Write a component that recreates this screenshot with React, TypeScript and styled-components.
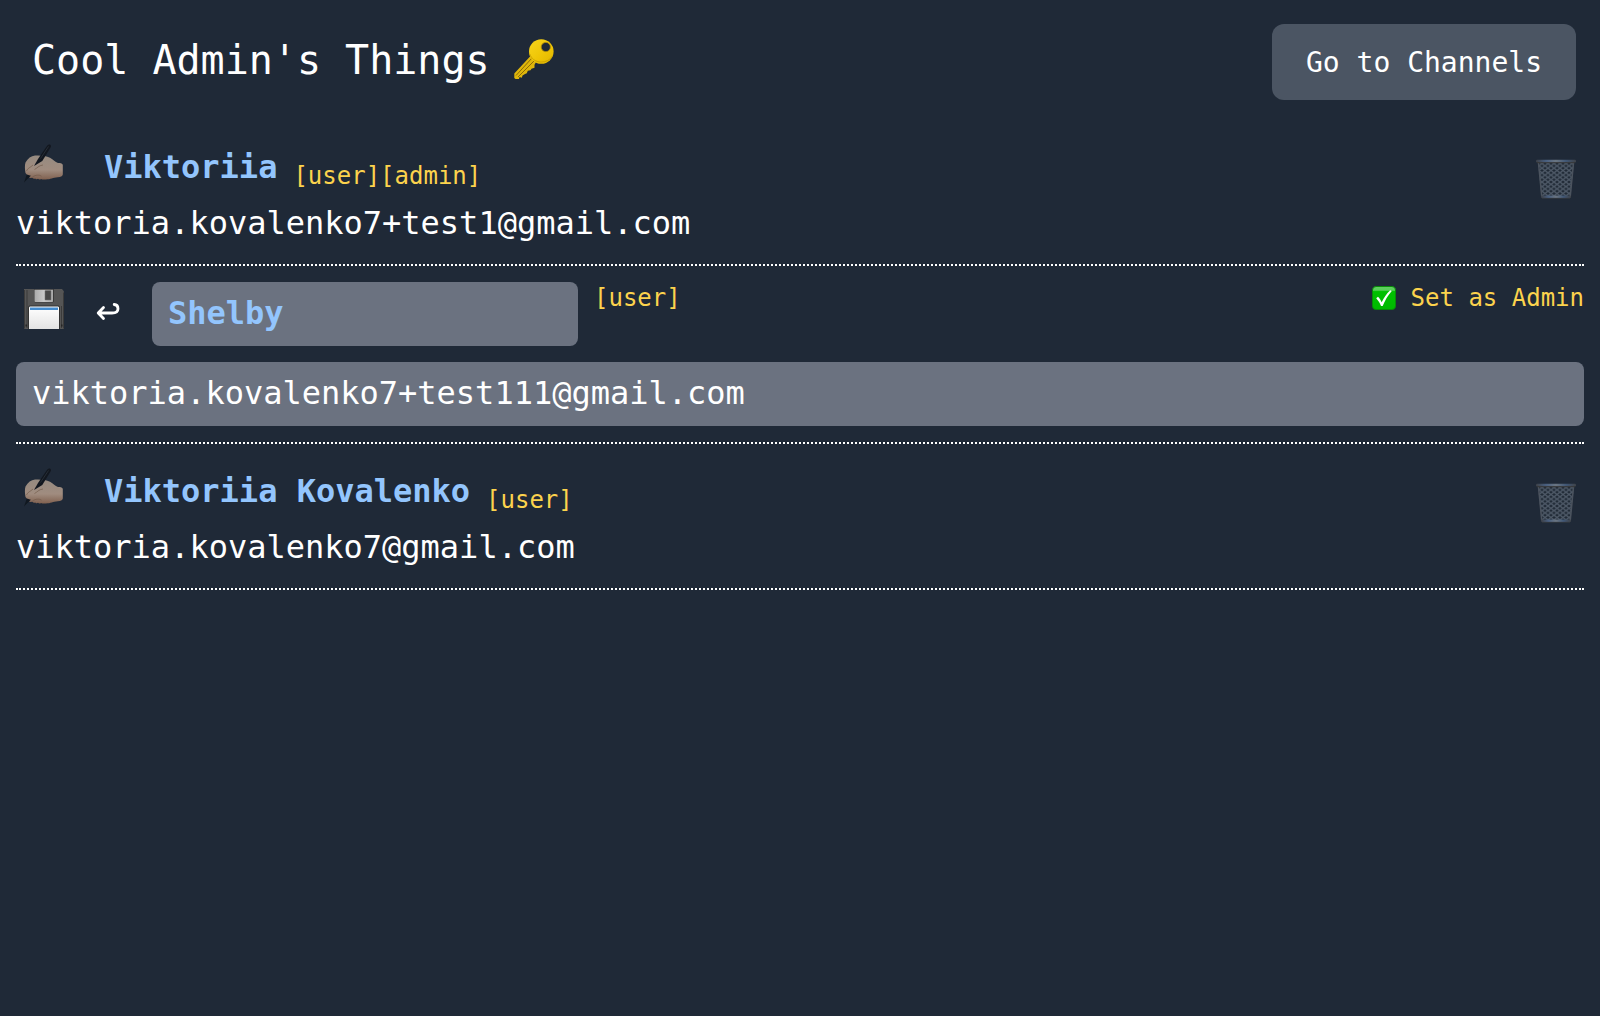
import React from "react";
import styled, { createGlobalStyle } from "styled-components";

const Global = createGlobalStyle`
  * { box-sizing: border-box; }
  body {
    margin: 0;
    min-height: 100vh;
    background: #1f2937;
    color: #fff;
    font-family: "DejaVu Sans Mono", monospace;
  }
  button, input { font-family: inherit; }
  svg { display: block; }
`;

const Header = styled.header`
  display: flex;
  justify-content: space-between;
  align-items: flex-start;
  height: 120px;
  padding: 24px 24px 0 32px;
`;

const Title = styled.h1`
  display: flex;
  margin: 8px 0 0;
  font-size: 40px;
  line-height: 56px;
  font-weight: 400;
  white-space: pre;
`;

const KeySlot = styled.span`
  margin: 7px 0 0 -1px;
`;

const NavButton = styled.button`
  width: 304px;
  height: 76px;
  padding: 2px 0 0;
  border: 0;
  border-radius: 12px;
  background: #4b5563;
  color: #fff;
  font-size: 28px;
  line-height: 40px;
`;

const List = styled.main`
  padding: 0 16px;
`;

const Row = styled.section<{ $editing?: boolean }>`
  display: flex;
  flex-direction: column;
  height: ${(p) => (p.$editing ? 178 : 146)}px;
  padding-top: ${(p) => (p.$editing ? 16 : 23)}px;
  border-bottom: 2px dotted #fff;
`;

const Line = styled.div<{ $height: number; $gap: number }>`
  display: flex;
  align-items: flex-start;
  height: ${(p) => p.$height}px;
  margin-bottom: ${(p) => p.$gap}px;
`;

const IconButton = styled.button<{ $top: number; $width?: number }>`
  display: flex;
  flex: none;
  justify-content: center;
  width: ${(p) => p.$width ?? 56}px;
  margin-top: ${(p) => p.$top}px;
  padding: 0;
  border: 0;
  background: none;
  color: inherit;
`;

const CancelButton = styled(IconButton)`
  padding-right: 8px;
`;

const Name = styled.strong`
  margin-left: 32px;
  color: #93c5fd;
  font-size: 32px;
  line-height: 48px;
`;

const Roles = styled.span<{ $top: number }>`
  margin: ${(p) => p.$top}px auto 0 16px;
  color: #fcd34d;
  font-size: 24px;
  line-height: 32px;
`;

const Email = styled.div`
  font-size: 32px;
  line-height: 48px;
`;

const Field = styled.input<{ $name?: boolean }>`
  flex: none;
  width: ${(p) => (p.$name ? "426px" : "100%")};
  height: 64px;
  padding: 0 16px 2px;
  border: 0;
  border-radius: 8px;
  outline: 0;
  background: #6b7280;
  color: ${(p) => (p.$name ? "#93c5fd" : "#fff")};
  font-size: 32px;
  font-weight: ${(p) => (p.$name ? 700 : 400)};
`;

const AdminToggle = styled.button`
  display: flex;
  align-items: center;
  gap: 15px;
  height: 31px;
  padding: 0;
  border: 0;
  background: none;
  color: #fcd34d;
  font-size: 24px;
  line-height: 32px;
`;

const KeyIcon = () => (
  <svg width="42" height="41" viewBox="0 0 42 41">
    <defs>
      <linearGradient id="keyGold" x1="0" y1="0" x2="1" y2="1">
        <stop offset="0" stopColor="#f8d51c" />
        <stop offset=".6" stopColor="#eec405" />
        <stop offset="1" stopColor="#e0b500" />
      </linearGradient>
    </defs>
    <path
      fill="#dfb60b"
      d="M17.500 17 1.300 34.500V39l1.200 1h3.500l.5-2 2.300.8.7-2.300 2.500-1.500 1.800-.7 1-2.500 2.700-.5 1-1.500 3-1v-3l2-3.500Z"
    />
    <path d="m3 36.500 16-17.500M5 38 21 22" stroke="#8d6b06" strokeWidth="1" fill="none" />
    <circle cx="28.300" cy="12.500" r="12.300" fill="url(#keyGold)" />
    <path d="M16.800 15c1.500 4.500 5.500 8 11.300 8 5 0 9-2 11.300-6" stroke="#c49a00" strokeWidth=".8" fill="none" />
    <circle cx="32.800" cy="8" r="4.600" fill="#1f2937" stroke="#b38d05" strokeWidth=".8" />
  </svg>
);

const WritingIcon = () => (
  <svg width="40" height="40" viewBox="0 0 40 40">
    <defs>
      <linearGradient id="skin" x1="0" y1="0" x2="0" y2="1">
        <stop offset="0" stopColor="#968b81" />
        <stop offset=".6" stopColor="#a08c7f" />
        <stop offset="1" stopColor="#80604f" />
      </linearGradient>
    </defs>
    <path
      fill="url(#skin)"
      d="M1.500 18.500C4 14.500 7 11.800 11 11.500c6-.3 11 .2 15 2.300 3.500 2 5 4.500 8 5.200 3 0 4.500.5 4.800 2v9.500c-.5 2-2 2.500-5 2.800-5 .3-7 2.200-12 2.200-2 0-3 .3-4.800-.5-1 .9-2 .8-3-.2-1 .7-2 .6-2.700-.4-1 .5-2 .4-3-.6l-2.500.2L1.500 29C.8 25 .6 21.500 1.500 18.500Z"
    />
    <path d="M10.500 25.500c3-1.500 4-4 8.500-4.500M8.500 33c3-2.300 7-2.300 9-.8M2.500 27c1-3 4-3.500 6.500-6" stroke="#6d5545" strokeWidth=".6" fill="none" />
    <path d="M23.300 1.500C24.800-.5 27.600.5 26.800 3L18.300 17 10 22l4-7Z" fill="#12171f" />
    <path d="m24.500 2.500-8 12" stroke="#343c47" strokeWidth=".6" />
    <path d="M2.800 30.500 6.800 31.800 0 38.500Z" fill="#111820" />
  </svg>
);

const FloppyIcon = () => (
  <svg width="40" height="40" viewBox="0 0 40 40">
    <defs>
      <linearGradient id="shutter" x1="0" y1="0" x2="1" y2="0">
        <stop offset="0" stopColor="#aaa" />
        <stop offset=".5" stopColor="#c8c8c8" />
        <stop offset="1" stopColor="#aaa" />
      </linearGradient>
      <linearGradient id="label" x1="0" y1="0" x2="0" y2="1">
        <stop offset="0" stopColor="#fff" />
        <stop offset="1" stopColor="#e3e3e3" />
      </linearGradient>
    </defs>
    <path d="M0 0h38L40 2.500V40H0Z" fill="#555" />
    <path d="M.5 1v38.500M39.500 3.500v36M3 1v38M37.500 17v22" stroke="#3b3b3b" fill="none" />
    <path d="M10 0h20v11.500c0 1.500-.5 2-2 2H12c-1.500 0-2-.5-2-2Z" fill="#3a3a3a" />
    <path d="M10.500.8h18.500v11.200c0 .7-.4 1-1 1H11.500c-.7 0-1-.3-1-1Z" fill="url(#shutter)" />
    <rect x="21" y="1.500" width="6" height="9.500" rx=".5" fill="#484848" stroke="#777" strokeWidth=".5" />
    <path d="M4 40V19c0-2 1-2.500 2.500-2.500h27c1.500 0 2.500.5 2.500 2.500v21Z" fill="#333" />
    <path d="M5 40V19c0-1 .5-1.500 1.500-1.500h27c1 0 1.500.5 1.500 1.500v21Z" fill="url(#label)" />
    <path d="M6 18.500h28V21H6Z" fill="#438bce" />
    <path d="M1.500 35.500h1.500v2H1.500Zm35.500 0h1.500v2H37Z" fill="#252525" />
  </svg>
);

const ReturnIcon = () => (
  <svg width="24" height="20" viewBox="0 0 24 20" fill="none" stroke="currentColor" strokeWidth="2.800" strokeLinecap="round" strokeLinejoin="round">
    <path d="M7.500 5.500 2.200 11l5.300 5.500M2.500 11H16c4 0 6-1.600 6-4.300 0-2.500-1.300-4-3.800-4.200" />
  </svg>
);

const TrashIcon = () => (
  <svg width="40" height="40" viewBox="0 0 40 40">
    <defs>
      <pattern id="mesh" width="6" height="4.600" patternUnits="userSpaceOnUse">
        <path d="m0 0 6 4.600M6 0 0 4.600" stroke="#4d5866" strokeWidth="1.300" />
      </pattern>
      <linearGradient id="rim" x1="0" y1="0" x2="1" y2="0">
        <stop offset="0" stopColor="#3c4047" />
        <stop offset=".25" stopColor="#485f80" />
        <stop offset=".5" stopColor="#6b7682" />
        <stop offset=".75" stopColor="#405776" />
        <stop offset="1" stopColor="#3f4349" />
      </linearGradient>
    </defs>
    <path d="M2 3h36l-3.500 35h-29Z" fill="#202a36" />
    <path d="M2 3h36l-3.500 35h-29Z" fill="url(#mesh)" />
    <path d="m2.500 4 3.300 34M37.500 4l-3.300 34" stroke="#4b535e" strokeWidth="1.500" />
    <rect x="0" y=".8" width="40" height="2.700" rx="1.300" fill="url(#rim)" />
    <path d="M1 3.700h38" stroke="#373737" strokeWidth="1" />
    <rect x="5" y="36.500" width="30" height="2.500" rx="1" fill="url(#rim)" />
    <path d="M6 39.300h28" stroke="#3b3d40" strokeWidth=".7" />
  </svg>
);

const CheckIcon = () => (
  <svg width="24" height="24" viewBox="0 0 24 24">
    <defs>
      <linearGradient id="checkGreen" x1="0" y1="0" x2="0" y2="1">
        <stop offset="0" stopColor="#60cf60" />
        <stop offset=".16" stopColor="#59cf59" />
        <stop offset=".22" stopColor="#00c000" />
        <stop offset="1" stopColor="#00b900" />
      </linearGradient>
    </defs>
    <rect x=".5" y=".5" width="23" height="23" rx="3.500" fill="url(#checkGreen)" stroke="#078b08" />
    <path d="M4.200 12.200 6 10.800c1.600 1.700 2.700 3.400 3.700 5.400 2.200-4.700 4.600-8.200 8.500-12l1.600.8c-4 4.700-6.800 9.300-9.100 15H9C8 17.200 6.500 14.700 4.200 12.200Z" fill="#fff" />
  </svg>
);

type User = { name: string; roles: string[]; email: string; editing?: boolean };

const users: User[] = [
  { name: "Viktoriia", roles: ["user", "admin"], email: "viktoria.kovalenko7+test1@gmail.com" },
  { name: "Shelby", roles: ["user"], email: "viktoria.kovalenko7+test111@gmail.com", editing: true },
  { name: "Viktoriia Kovalenko", roles: ["user"], email: "viktoria.kovalenko7@gmail.com" },
];

const formatRoles = (roles: string[]) => roles.map((r) => `[${r}]`).join("");

const UserRow = ({ user }: { user: User }) => (
  <Row>
    <Line $height={48} $gap={8}>
      <IconButton $top={1} aria-label="Edit"><WritingIcon /></IconButton>
      <Name>{user.name}</Name>
      <Roles $top={17}>{formatRoles(user.roles)}</Roles>
      <IconButton $top={16} aria-label="Delete"><TrashIcon /></IconButton>
    </Line>
    <Email>{user.email}</Email>
  </Row>
);

const EditRow = ({ user }: { user: User }) => (
  <Row $editing>
    <Line $height={64} $gap={16}>
      <IconButton $top={7} aria-label="Save"><FloppyIcon /></IconButton>
      <CancelButton $top={20} $width={80} aria-label="Cancel"><ReturnIcon /></CancelButton>
      <Field $name aria-label="Name" defaultValue={user.name} />
      <Roles $top={0}>{formatRoles(user.roles)}</Roles>
      <AdminToggle><CheckIcon />Set as Admin</AdminToggle>
    </Line>
    <Field aria-label="Email" defaultValue={user.email} />
  </Row>
);

export default function App() {
  return (
    <>
      <Global />
      <Header>
        <Title>{"Cool Admin's Things "}<KeySlot><KeyIcon /></KeySlot></Title>
        <NavButton>Go to Channels</NavButton>
      </Header>
      <List>
        {users.map((u) => (u.editing ? <EditRow key={u.email} user={u} /> : <UserRow key={u.email} user={u} />))}
      </List>
    </>
  );
}
